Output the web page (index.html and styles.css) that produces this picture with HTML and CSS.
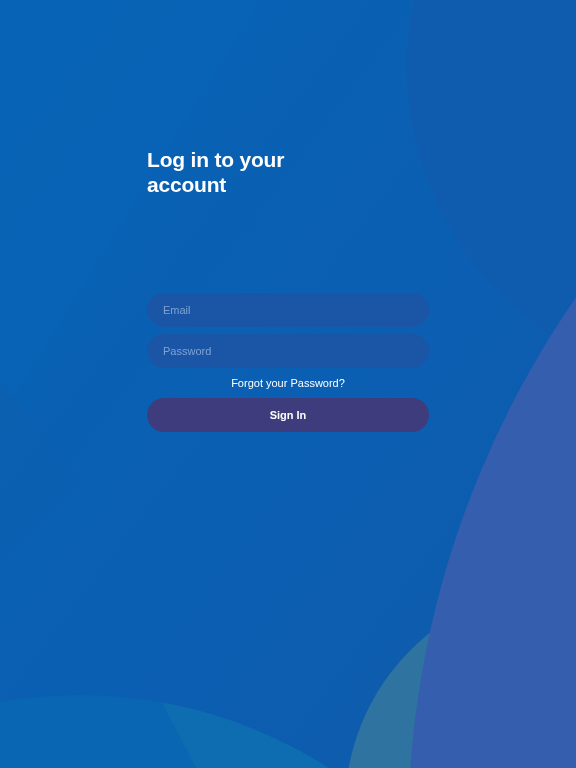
FILE: index.html
```html
<!DOCTYPE html>
<html lang="en">
<head>
  <meta charset="UTF-8">
  <title>Log in</title>
  <link rel="stylesheet" href="styles.css">
</head>
<body>

  <svg class="backdrop" viewBox="0 0 576 768" preserveAspectRatio="none" aria-hidden="true">
    <defs>
      <linearGradient id="bg" x1="0" y1="0" x2="1" y2="1">
        <stop offset="0" stop-color="#0763b6"/>
        <stop offset="0.55" stop-color="#0b5fb2"/>
        <stop offset="1" stop-color="#0f5aab"/>
      </linearGradient>
      <clipPath id="leftBlob">
        <circle cx="80" cy="1155" r="460"/>
      </clipPath>
    </defs>
    <rect width="576" height="768" fill="url(#bg)"/>
    <polygon points="0,0 260,0 0,420" fill="#0864b6" opacity="0.5"/>
    <polygon points="0,560 80,480 0,380" fill="#0d5fae" opacity="0.6"/>
    <circle cx="729" cy="67" r="322" fill="#0f5caf"/>
    <circle cx="80" cy="1155" r="460" fill="#0866b3"/>
    <polygon points="158,695 480,695 480,768 196,768" fill="#0e6db0" clip-path="url(#leftBlob)"/>
    <circle cx="568" cy="808" r="223" fill="#2f73a0"/>
    <circle cx="1349" cy="834" r="941" fill="#355fae"/>
  </svg>

  <main class="page">
    <div class="login">
      <h1 class="title">Log in to your<br>account</h1>

      <form class="form" onsubmit="return false">
        <input class="field" type="email" placeholder="Email">
        <input class="field" type="password" placeholder="Password">
        <a class="forgot" href="#">Forgot your Password?</a>
        <button class="signin" type="submit">Sign In</button>
      </form>
    </div>
  </main>

</body>
</html>
```

FILE: styles.css
```css
html, body {
  margin: 0;
  height: 100%;
}

body {
  background: #0a60b3;
  font-family: "Liberation Sans", Arial, sans-serif;
  color: #fff;
  overflow: hidden;
}

.backdrop {
  position: fixed;
  top: 0;
  left: 0;
  width: 100%;
  height: 100%;
  z-index: 0;
}

.page {
  position: relative;
  z-index: 1;
  display: flex;
  justify-content: center;
  padding-top: 147px;
}

.login {
  width: 282px;
}

.title {
  margin: 0;
  font-size: 21px;
  line-height: 25px;
  font-weight: bold;
  letter-spacing: -0.2px;
}

.form {
  display: flex;
  flex-direction: column;
  margin-top: 96px;
}

.field {
  height: 34px;
  margin: 0 0 7px;
  padding: 0 16px;
  border: none;
  border-radius: 17px;
  background: #1b56a6;
  color: #fff;
  font-family: inherit;
  font-size: 11px;
  outline: none;
}

.field::placeholder {
  color: #7fa2d4;
}

.forgot {
  display: block;
  margin-top: -7px;
  height: 30px;
  line-height: 30px;
  text-align: center;
  color: #fff;
  font-size: 11px;
  text-decoration: none;
}

.signin {
  height: 34px;
  border: none;
  border-radius: 17px;
  background: #3e3c7c;
  color: #fff;
  font-family: inherit;
  font-size: 11px;
  font-weight: bold;
  cursor: pointer;
}
```
